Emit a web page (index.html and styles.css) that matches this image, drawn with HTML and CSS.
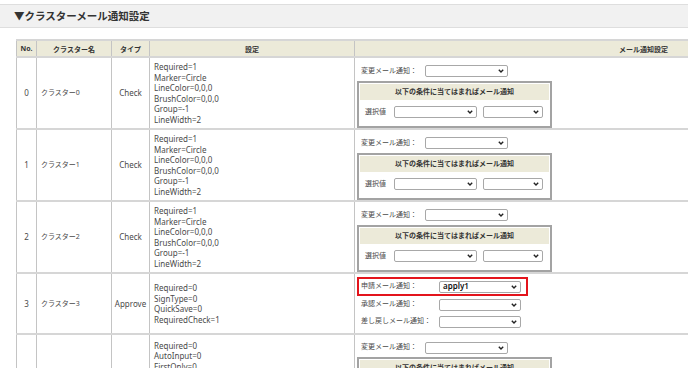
FILE: index.html
```html
<!DOCTYPE html>
<html lang="ja">
<head>
    <meta charset="UTF-8">
    <title>クラスターメール通知設定</title>
    <meta name="viewport" content="width=device-width, initial-scale=1">
    <link rel="stylesheet" href="styles.css">
</head>
<body>

    <h2 class="section-title">▼クラスターメール通知設定</h2>

    <div class="table-wrap">
        <table class="cluster-table">
            <colgroup>
                <col class="col-no">
                <col class="col-name">
                <col class="col-type">
                <col class="col-setting">
                <col class="col-notify">
            </colgroup>
            <thead>
                <tr>
                    <th>No.</th>
                    <th>クラスター名</th>
                    <th>タイプ</th>
                    <th>設定</th>
                    <th>メール通知設定</th>
                </tr>
            </thead>
            <tbody>
                <tr>
                    <td class="no">0</td>
                    <td>クラスター0</td>
                    <td class="type">Check</td>
                    <td class="setting">Required=1<br>Marker=Circle<br>LineColor=0,0,0<br>BrushColor=0,0,0<br>Group=-1<br>LineWidth=2</td>
                    <td class="notify">
                        <div class="notify-line">
                            <span class="notify-label">変更メール通知：</span>
                            <span class="select"><span></span><svg viewBox="0 0 6 4"><path d="M0.8 0.8 L3 3 L5.2 0.8"/></svg></span>
                        </div>
                        <div class="condition-box">
                            <div class="condition-head">以下の条件に当てはまればメール通知</div>
                            <div class="condition-row">
                                <span class="condition-label">選択値</span>
                                <span class="select"><span></span><svg viewBox="0 0 6 4"><path d="M0.8 0.8 L3 3 L5.2 0.8"/></svg></span>
                                <span class="select short"><span></span><svg viewBox="0 0 6 4"><path d="M0.8 0.8 L3 3 L5.2 0.8"/></svg></span>
                            </div>
                        </div>
                    </td>
                </tr>
                <tr>
                    <td class="no">1</td>
                    <td>クラスター1</td>
                    <td class="type">Check</td>
                    <td class="setting">Required=1<br>Marker=Circle<br>LineColor=0,0,0<br>BrushColor=0,0,0<br>Group=-1<br>LineWidth=2</td>
                    <td class="notify">
                        <div class="notify-line">
                            <span class="notify-label">変更メール通知：</span>
                            <span class="select"><span></span><svg viewBox="0 0 6 4"><path d="M0.8 0.8 L3 3 L5.2 0.8"/></svg></span>
                        </div>
                        <div class="condition-box">
                            <div class="condition-head">以下の条件に当てはまればメール通知</div>
                            <div class="condition-row">
                                <span class="condition-label">選択値</span>
                                <span class="select"><span></span><svg viewBox="0 0 6 4"><path d="M0.8 0.8 L3 3 L5.2 0.8"/></svg></span>
                                <span class="select short"><span></span><svg viewBox="0 0 6 4"><path d="M0.8 0.8 L3 3 L5.2 0.8"/></svg></span>
                            </div>
                        </div>
                    </td>
                </tr>
                <tr>
                    <td class="no">2</td>
                    <td>クラスター2</td>
                    <td class="type">Check</td>
                    <td class="setting">Required=1<br>Marker=Circle<br>LineColor=0,0,0<br>BrushColor=0,0,0<br>Group=-1<br>LineWidth=2</td>
                    <td class="notify">
                        <div class="notify-line">
                            <span class="notify-label">変更メール通知：</span>
                            <span class="select"><span></span><svg viewBox="0 0 6 4"><path d="M0.8 0.8 L3 3 L5.2 0.8"/></svg></span>
                        </div>
                        <div class="condition-box">
                            <div class="condition-head">以下の条件に当てはまればメール通知</div>
                            <div class="condition-row">
                                <span class="condition-label">選択値</span>
                                <span class="select"><span></span><svg viewBox="0 0 6 4"><path d="M0.8 0.8 L3 3 L5.2 0.8"/></svg></span>
                                <span class="select short"><span></span><svg viewBox="0 0 6 4"><path d="M0.8 0.8 L3 3 L5.2 0.8"/></svg></span>
                            </div>
                        </div>
                    </td>
                </tr>
                <tr>
                    <td class="no">3</td>
                    <td>クラスター3</td>
                    <td class="type">Approve</td>
                    <td class="setting">Required=0<br>SignType=0<br>QuickSave=0<br>RequiredCheck=1</td>
                    <td class="notify approve">
                        <div class="highlight">
                            <div class="notify-line">
                                <span class="notify-label wide">申請メール通知：</span>
                                <span class="select wide"><span class="select-value">apply1</span><svg viewBox="0 0 6 4"><path d="M0.8 0.8 L3 3 L5.2 0.8"/></svg></span>
                            </div>
                        </div>
                        <div class="notify-line">
                            <span class="notify-label wide">承認メール通知：</span>
                            <span class="select wide"><span></span><svg viewBox="0 0 6 4"><path d="M0.8 0.8 L3 3 L5.2 0.8"/></svg></span>
                        </div>
                        <div class="notify-line">
                            <span class="notify-label wide">差し戻しメール通知：</span>
                            <span class="select wide"><span></span><svg viewBox="0 0 6 4"><path d="M0.8 0.8 L3 3 L5.2 0.8"/></svg></span>
                        </div>
                    </td>
                </tr>
                <tr>
                    <td class="no">4</td>
                    <td>クラスター4</td>
                    <td class="type">Input</td>
                    <td class="setting">Required=0<br>AutoInput=0<br>FirstOnly=0<br>Lines=1<br>Align=0<br>MaxLength=0<br>InputType=0<br>Format=</td>
                    <td class="notify">
                        <div class="notify-line">
                            <span class="notify-label">変更メール通知：</span>
                            <span class="select"><span></span><svg viewBox="0 0 6 4"><path d="M0.8 0.8 L3 3 L5.2 0.8"/></svg></span>
                        </div>
                        <div class="condition-box">
                            <div class="condition-head">以下の条件に当てはまればメール通知</div>
                            <div class="condition-row">
                                <span class="condition-label">入力値</span>
                                <span class="select"><span></span><svg viewBox="0 0 6 4"><path d="M0.8 0.8 L3 3 L5.2 0.8"/></svg></span>
                                <span class="select short"><span></span><svg viewBox="0 0 6 4"><path d="M0.8 0.8 L3 3 L5.2 0.8"/></svg></span>
                            </div>
                            <div class="condition-row">
                                <span class="condition-label">選択値</span>
                                <span class="select"><span></span><svg viewBox="0 0 6 4"><path d="M0.8 0.8 L3 3 L5.2 0.8"/></svg></span>
                                <span class="select short"><span></span><svg viewBox="0 0 6 4"><path d="M0.8 0.8 L3 3 L5.2 0.8"/></svg></span>
                            </div>
                        </div>
                    </td>
                </tr>
            </tbody>
        </table>
    </div>

</body>
</html>
```

FILE: styles.css
```css
body {
    margin: 0;
    font-family: "Noto Sans", "Noto Sans CJK JP", sans-serif;
    font-size: 7px;
    color: #4a4a4a;
    background: #fff;
}

.section-title {
    margin: 4px 0 0;
    height: 22px;
    line-height: 22px;
    padding-left: 14px;
    background: #f1f1f1;
    border-top: 1px solid #dedede;
    border-bottom: 1px solid #dedede;
    font-size: 10.5px;
    font-weight: bold;
    color: #333;
}

.table-wrap {
    overflow: hidden;
    padding: 11px 0 0 16px;
}

.cluster-table {
    border-collapse: collapse;
    table-layout: fixed;
    width: 916px;
}

.col-no { width: 20px; }
.col-name { width: 75px; }
.col-type { width: 38px; }
.col-setting { width: 205px; }
.col-notify { width: 578px; }

.cluster-table th,
.cluster-table td {
    border-left: 1px solid #c4c4c4;
    border-right: 1px solid #c4c4c4;
    border-top: 2px solid #d6d6d6;
    border-bottom: 2px solid #d6d6d6;
}

.cluster-table th {
    height: 15px;
    padding: 0;
    background: #ecead9;
    font-size: 7px;
    font-weight: bold;
    color: #333;
}

.cluster-table td {
    padding: 4px 4px 3px;
    line-height: 10.5px;
    vertical-align: middle;
}

.cluster-table td.no,
.cluster-table td.type {
    padding: 4px 0 3px;
    text-align: center;
    font-size: 8px;
}

.cluster-table td.setting {
    font-size: 8px;
}

.cluster-table td.notify {
    padding: 4px 2px 0;
}

.cluster-table td.notify.approve {
    padding: 3px 2px;
}

.notify-line {
    display: flex;
    align-items: center;
    height: 17px;
    padding-left: 4px;
}

.notify-label {
    width: 64px;
    flex: none;
}

.notify-label.wide {
    width: 78px;
}

.highlight {
    width: fit-content;
    border: 2px solid #e3141c;
    padding: 1px 5px 1px 2px;
}

.highlight .notify-line {
    height: 13px;
    padding-left: 0;
}

.select {
    box-sizing: border-box;
    display: flex;
    align-items: center;
    flex: none;
    width: 83px;
    height: 12px;
    padding: 0 3px;
    background: #fff;
    border: 1px solid #a8a8a8;
    border-radius: 2px;
    color: #111;
}

.select.wide {
    width: 82px;
}

.select.short {
    width: 60px;
}

.select-value {
    font-size: 8px;
    font-weight: 600;
}

.select svg {
    width: 6px;
    height: 4px;
    margin-left: auto;
    fill: none;
    stroke: #222;
    stroke-width: 1.4;
}

.condition-box {
    box-sizing: border-box;
    width: 195px;
    margin-top: 1px;
    padding: 1px;
    border: 2px solid #a3a3a3;
}

.condition-head {
    height: 16px;
    line-height: 16px;
    background: #ecead9;
    text-align: center;
    font-weight: bold;
    color: #333;
}

.condition-row {
    display: flex;
    align-items: center;
    height: 25px;
    padding-left: 5px;
}

.condition-label {
    width: 29px;
    flex: none;
}

.condition-row .select + .select {
    margin-left: 6px;
}
```
